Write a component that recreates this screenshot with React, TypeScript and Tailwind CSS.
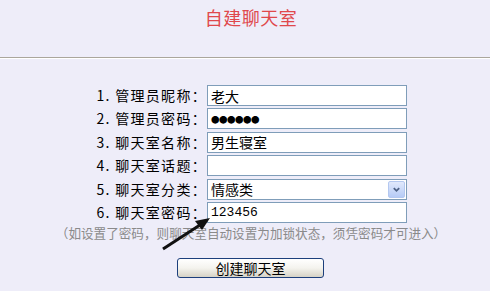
import React from "react";

const rows = [
  { label: "1. 管理员昵称：", value: "老大", kind: "text" },
  { label: "2. 管理员密码：", value: "●●●●●●", kind: "pass" },
  { label: "3. 聊天室名称：", value: "男生寝室", kind: "text" },
  { label: "4. 聊天室话题：", value: "", kind: "text" },
  { label: "5. 聊天室分类：", value: "情感类", kind: "select" },
  { label: "6. 聊天室密码：", value: "123456", kind: "mono" },
];

function Field({ kind, value }: { kind: string; value: string }) {
  return (
    <div className="relative w-[200px] h-[21px] border border-[#7f9db9] bg-white flex items-center pl-[3px] text-[14px] leading-none text-black">
      {kind === "pass" && <span className="text-[8.5px] tracking-[-0.5px]">{value}</span>}
      {kind === "mono" && <span className="font-['Liberation_Mono',monospace] text-[13px]">{value}</span>}
      {(kind === "text" || kind === "select") && <span>{value}</span>}
      {kind === "select" && (
        <div className="absolute right-[1px] top-[1px] w-[17px] h-[17px] rounded-[2px] border border-[#b4c8f0] bg-gradient-to-b from-[#e1e9fc] to-[#b6cbf6] flex items-center justify-center">
          <svg viewBox="0 0 10 10" className="w-[9px] h-[9px]">
            <path d="M2 3.5 L5 6.5 L8 3.5" fill="none" stroke="#4d6185" strokeWidth="2" />
          </svg>
        </div>
      )}
    </div>
  );
}

export default function App() {
  return (
    <div className="relative w-[490px] h-[291px] overflow-hidden bg-[#eeedf9] font-['Noto_Sans_CJK_SC','Noto_Sans',sans-serif]">
      {/* title */}
      <div className="h-[57px] pt-[6px] pl-[12px] text-center">
        <h1 className="text-[18px] leading-[22px] text-[#e0484c] tracking-[0.5px]">自建聊天室</h1>
      </div>
      <div className="h-[2px] border-t border-[#aaa69c] border-b border-b-white" />

      {/* form */}
      <div className="pt-[26px]">
        {rows.map((r) => (
          <div key={r.label} className="flex items-start h-[23.4px]">
            <div className="w-[207px] text-right text-[14px] leading-[21px] tracking-[1.3px] text-black whitespace-nowrap">{r.label}</div>
            <Field kind={r.kind} value={r.value} />
          </div>
        ))}
        <p className="text-center pl-[12px] text-[12.6px] leading-[15px] text-[#8a8a8a] whitespace-nowrap">
          （如设置了密码，则聊天室自动设置为加锁状态，须凭密码才可进入）
        </p>
        <div className="mt-[18px] flex justify-center pl-[11px]">
          <button className="w-[147px] h-[20px] rounded-[3px] border border-[#1c3f7c] bg-gradient-to-b from-white via-[#f4f3ee] to-[#d6d3c6] text-[14px] leading-none text-black">
            创建聊天室
          </button>
        </div>
      </div>

      {/* arrow */}
      <svg className="absolute left-[155px] top-[212px] w-[62px] h-[44px]" viewBox="0 0 62 44">
        <line x1="8" y1="37" x2="48" y2="11" stroke="#111" strokeWidth="3" />
        <polygon points="55,6 40,9 47,18" fill="#111" />
      </svg>
    </div>
  );
}
